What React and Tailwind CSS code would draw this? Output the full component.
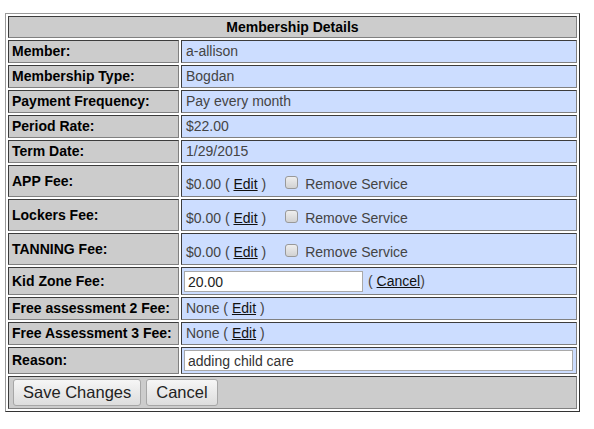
import React from 'react';

const labelCls =
  'bg-[#cccccc] border border-solid border-t-[#3c3c3c] border-l-[#3c3c3c] border-r-[#808080] border-b-[#808080] px-[3px] font-bold text-black';
const valueCls =
  'bg-[#ccddff] border border-solid border-t-[#3c3c3c] border-l-[#3c3c3c] border-r-[#808080] border-b-[#808080] px-[2px] text-[#444444]';

const Checkbox = () => (
  <span className="inline-block w-[13px] h-[13px] shrink-0 rounded-[3px] border border-[#999999] bg-gradient-to-b from-[#eeeeee] to-[#d2d2d2]" />
);

const EditLink = ({ children }) => (
  <a href="#" className="text-[#111111] underline">
    {children}
  </a>
);

const SimpleRow = ({ label, value }) => (
  <tr>
    <td className={`${labelCls} py-[2px] align-middle`}>{label}</td>
    <td className={`${valueCls} py-[2px] align-middle`}>
      <span className="pl-[2px]">{value}</span>
    </td>
  </tr>
);

const FeeRow = ({ label }) => (
  <tr>
    <td className={`${labelCls} pt-[2px] pb-[2px] align-middle`}>{label}</td>
    <td className={`${valueCls} pt-[10px] pb-[3px] align-top`}>
      <div className="flex items-start pl-[2px]">
        <span>$0.00 (&nbsp;</span>
        <EditLink>Edit</EditLink>
        <span>&nbsp;)</span>
        <span className="ml-[19px] mr-[7px] flex">
          <Checkbox />
        </span>
        <span>Remove Service</span>
      </div>
    </td>
  </tr>
);

const NoneRow = ({ label }) => (
  <tr>
    <td className={`${labelCls} py-[2px] align-middle`}>{label}</td>
    <td className={`${valueCls} py-[2px] align-middle`}>
      <span className="pl-[2px]">None (&nbsp;</span>
      <EditLink>Edit</EditLink>
      <span>&nbsp;)</span>
    </td>
  </tr>
);

export default function App() {
  return (
    <div className="min-h-[429px] bg-white pl-[5px] pt-[13px] font-['Liberation_Sans',Arial,sans-serif] text-[14px] leading-[17px]">
      <table className="w-[575px] table-fixed border-separate border-spacing-[2px] border border-solid border-t-[#9a9a9a] border-l-[#9a9a9a] border-r-[#333333] border-b-[#333333]">
        <colgroup>
          <col className="w-[171px]" />
          <col />
        </colgroup>
        <tbody>
          <tr>
            <td
              colSpan={2}
              className={`${labelCls} py-[2px] leading-[16px] text-center`}
            >
              Membership Details
            </td>
          </tr>
          <SimpleRow label="Member:" value="a-allison" />
          <SimpleRow label="Membership Type:" value="Bogdan" />
          <SimpleRow label="Payment Frequency:" value="Pay every month" />
          <SimpleRow label="Period Rate:" value="$22.00" />
          <SimpleRow label="Term Date:" value="1/29/2015" />
          <FeeRow label="APP Fee:" />
          <FeeRow label="Lockers Fee:" />
          <FeeRow label="TANNING Fee:" />
          <tr>
            <td className={`${labelCls} py-[2px] align-middle`}>Kid Zone Fee:</td>
            <td className={`${valueCls} pt-[3px] pb-[2px] align-middle`}>
              <div className="flex items-center">
                <input
                  type="text"
                  defaultValue="20.00"
                  className="w-[179px] h-[21px] bg-white border border-[#a9a9a9] px-[3px] text-[14px] text-[#222222] outline-none font-['Liberation_Sans',Arial,sans-serif]"
                />
                <span className="ml-[5px]">(&nbsp;</span>
                <EditLink>Cancel</EditLink>
                <span>)</span>
              </div>
            </td>
          </tr>
          <NoneRow label="Free assessment 2 Fee:" />
          <NoneRow label="Free Assessment 3 Fee:" />
          <tr>
            <td className={`${labelCls} py-[2px] align-middle`}>Reason:</td>
            <td className={`${valueCls} py-[2px] align-middle`}>
              <input
                type="text"
                defaultValue="adding child care"
                className="block w-[389px] h-[21px] bg-white border border-[#a9a9a9] px-[3px] text-[14px] text-[#333333] outline-none font-['Liberation_Sans',Arial,sans-serif]"
              />
            </td>
          </tr>
          <tr>
            <td colSpan={2} className={`${labelCls} px-[4px] py-[2px] font-normal`}>
              <div className="flex gap-[5px]">
                <button className="px-[9px] py-[3px] text-[16.5px] leading-[19px] text-[#222222] border border-[#a6a6a6] rounded-[3px] bg-gradient-to-b from-[#f6f6f6] to-[#dddddd]">
                  Save Changes
                </button>
                <button className="px-[9px] py-[3px] text-[16.5px] leading-[19px] text-[#222222] border border-[#a6a6a6] rounded-[3px] bg-gradient-to-b from-[#f6f6f6] to-[#dddddd]">
                  Cancel
                </button>
              </div>
            </td>
          </tr>
        </tbody>
      </table>
    </div>
  );
}
